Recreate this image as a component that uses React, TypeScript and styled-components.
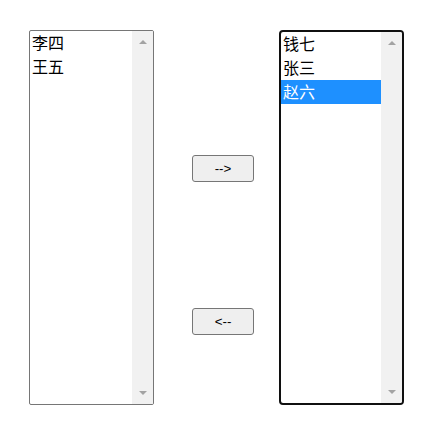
import React from "react";
import styled, { createGlobalStyle, css } from "styled-components";

const GlobalStyle = createGlobalStyle`
  body {
    margin: 8px;
    background: #ffffff;
    font-family: "Noto Sans CJK SC", "Noto Sans", sans-serif;
  }
`;

const Page = styled.div`
  display: flex;
  align-items: flex-start;
  padding: 22px 0 0 21px;
`;

const ListBox = styled.div<{ $focused?: boolean }>`
  box-sizing: border-box;
  width: 125px;
  height: 375px;
  display: flex;
  background: #ffffff;
  border: 1px solid #767676;
  border-radius: 2px;
  overflow: hidden;
  ${(p) =>
    p.$focused &&
    css`
      border: 2px solid #101010;
      border-radius: 4px;
    `}
`;

const Options = styled.ul`
  flex: 1;
  margin: 0;
  padding: 0;
  list-style: none;
  display: flex;
  flex-direction: column;
`;

const Option = styled.li<{ $selected?: boolean }>`
  font-family: "Noto Sans CJK SC", sans-serif;
  font-size: 16px;
  line-height: 23px;
  padding: 0 2px 1px;
  color: #000000;
  white-space: nowrap;
  ${(p) =>
    p.$selected &&
    css`
      background: #1e90ff;
      color: #ffffff;
    `}
`;

const ScrollTrack = styled.div`
  width: 21px;
  flex-shrink: 0;
  background: #f1f1f1;
  display: flex;
  flex-direction: column;
  align-items: center;
  justify-content: space-between;
  padding: 9px 0;
  box-sizing: border-box;
`;

const Arrow = styled.span<{ $dir: "up" | "down" }>`
  width: 0;
  height: 0;
  border-left: 4px solid transparent;
  border-right: 4px solid transparent;
  ${(p) =>
    p.$dir === "up"
      ? css`
          border-bottom: 4px solid #a3a3a3;
        `
      : css`
          border-top: 4px solid #a3a3a3;
        `}
`;

const Middle = styled.div`
  width: 125px;
  display: flex;
  flex-direction: column;
  align-items: flex-start;
  padding: 125px 0 0 38px;
  box-sizing: border-box;
  gap: 126px;
`;

const MoveButton = styled.button`
  box-sizing: border-box;
  width: 62px;
  height: 27px;
  padding: 0;
  background: #efefef;
  border: 1px solid #767676;
  border-radius: 3px;
  color: #000000;
  font-family: "Liberation Sans", Arial, sans-serif;
  font-size: 13.33px;
  line-height: 15px;
  cursor: default;
`;

type Props = { items: string[]; selected?: string; focused?: boolean };

function List({ items, selected, focused }: Props) {
  return (
    <ListBox $focused={focused} role="listbox" aria-multiselectable="true">
      <Options>
        {items.map((it) => (
          <Option key={it} $selected={it === selected} role="option" aria-selected={it === selected}>
            {it}
          </Option>
        ))}
      </Options>
      <ScrollTrack>
        <Arrow $dir="up" />
        <Arrow $dir="down" />
      </ScrollTrack>
    </ListBox>
  );
}

export default function App() {
  return (
    <>
      <GlobalStyle />
      <Page>
        <List items={["李四", "王五"]} />
        <Middle>
          <MoveButton type="button">--&gt;</MoveButton>
          <MoveButton type="button">&lt;--</MoveButton>
        </Middle>
        <List items={["钱七", "张三", "赵六"]} selected="赵六" focused />
      </Page>
    </>
  );
}
